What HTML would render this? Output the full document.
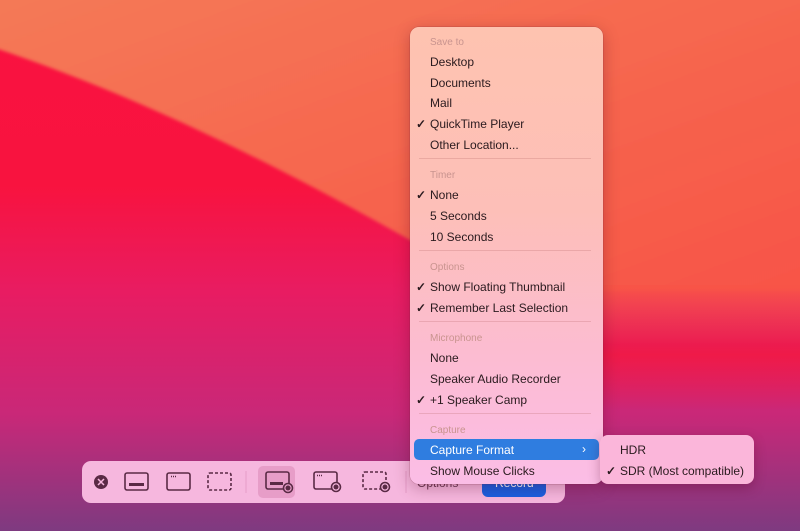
<!DOCTYPE html>
<html><head><meta charset="utf-8"><style>
*{margin:0;padding:0;box-sizing:border-box}
body{width:800px;height:531px;overflow:hidden;position:relative;font-family:"Liberation Sans",sans-serif;background:#e8336a}
.menu{position:absolute;left:410px;top:27px;width:193px;height:457px;border-radius:9px;background:linear-gradient(180deg,#fec3b0 0%,#fdbfb8 40%,#fcbcd4 75%,#fbbde6 100%);box-shadow:0 4px 16px rgba(80,0,30,.3),0 0 0 .5px rgba(120,40,60,.3)}
.it{position:absolute;left:20px;font-size:12px;color:#2a1a1e;white-space:nowrap;line-height:14px}
.hd{position:absolute;left:20px;font-size:10px;color:#c9948f;line-height:12px}
.ck{position:absolute;left:-14px;top:0;font-size:12px;font-weight:bold}
.sep{position:absolute;left:9px;right:12px;height:1px;background:rgba(180,100,100,.25)}
.hl{position:absolute;left:4px;width:185px;top:412px;height:21px;background:#2f7de0;border-radius:5px}
.sub{position:absolute;left:600px;top:435px;width:154px;height:49px;border-radius:8px;background:#fbb6da;box-shadow:0 4px 12px rgba(80,0,30,.3)}
.bar{position:absolute;left:82px;top:461px;width:483px;height:42px;border-radius:9px;background:#f6b7de}
</style></head><body>
<svg width="800" height="531" style="position:absolute;left:0;top:0">
<defs>
<linearGradient id="bg" x1="0" y1="0" x2="0" y2="1">
<stop offset="0" stop-color="#fa1240"/><stop offset=".35" stop-color="#f8133f"/><stop offset=".55" stop-color="#e81c62"/><stop offset=".78" stop-color="#c92878"/><stop offset="1" stop-color="#7e3a80"/></linearGradient>
<linearGradient id="or" x1="0" y1="0" x2="1" y2="1">
<stop offset="0" stop-color="#f47a57"/><stop offset="1" stop-color="#f85447"/></linearGradient>
<linearGradient id="fade" x1="0" y1="0" x2="0" y2="1">
<stop offset="0" stop-color="#f85447"/><stop offset="1" stop-color="#f85447" stop-opacity="0"/></linearGradient>
<linearGradient id="red" x1="0" y1="0" x2="0" y2="1">
<stop offset="0" stop-color="#f5183f" stop-opacity="0"/><stop offset=".5" stop-color="#f5183f" stop-opacity=".8"/><stop offset="1" stop-color="#f5183f" stop-opacity="0"/></linearGradient>
<filter id="b"><feGaussianBlur stdDeviation="1.5"/></filter>
</defs>
<rect width="800" height="531" fill="url(#bg)"/>
<rect x="560" y="300" width="245" height="110" fill="url(#red)"/>
<path d="M-5 -5 H805 V290 L600 290 C520 275 460 260 410 240 C250 150 120 90 -5 48 Z" fill="url(#or)" filter="url(#b)"/>
<rect x="560" y="285" width="245" height="60" fill="url(#fade)"/>
</svg>
<div class="bar">
<svg width="483" height="42" style="position:absolute;left:0;top:0" fill="none" stroke="#5a2a45" stroke-width="1.6">
<circle cx="19" cy="21" r="7" fill="#5a2a45" stroke="none"/>
<path d="M16 18l6 6M22 18l-6 6" stroke="#f6b7de" stroke-width="1.5"/>
<rect x="43" y="12" width="23" height="17" rx="2"/><rect x="47" y="22" width="15" height="3" fill="#5a2a45" stroke="none"/>
<rect x="85" y="12" width="23" height="17" rx="2"/><path d="M89 15.5h5" stroke-dasharray="1 1"/>
<rect x="126" y="12" width="23" height="17" rx="2" stroke-dasharray="3 2"/>
<path d="M164 10v22" stroke="#e59cc8" stroke-width="1"/>
<rect x="176" y="5" width="37" height="32" rx="5" fill="#e79dc8" stroke="none"/>
<rect x="184" y="11" width="23" height="17" rx="2"/><rect x="188" y="21" width="13" height="3" fill="#5a2a45" stroke="none"/><circle cx="206" cy="27" r="4.5" fill="#e79dc8"/><circle cx="206" cy="27" r="2.5" fill="#5a2a45" stroke="none"/>
<rect x="232" y="11" width="23" height="17" rx="2"/><path d="M235 14.5h5" stroke-dasharray="1 1"/><circle cx="254" cy="26" r="4.5" fill="#f6b7de"/><circle cx="254" cy="26" r="2.5" fill="#5a2a45" stroke="none"/>
<rect x="281" y="11" width="23" height="17" rx="2" stroke-dasharray="3 2"/><circle cx="303" cy="26" r="4.5" fill="#f6b7de"/><circle cx="303" cy="26" r="2.5" fill="#5a2a45" stroke="none"/>
<path d="M324 10v22" stroke="#e59cc8" stroke-width="1"/>
<rect x="400" y="9" width="64" height="27" rx="6" fill="#1a5fe0" stroke="none"/>
</svg>
<div style="position:absolute;left:335px;top:15px;font-size:12px;color:#6a3a55">Options</div>
<div style="position:absolute;left:413px;top:15px;font-size:12px;color:#fff">Record</div>
</div>
<div class="menu">
<div class="hd" style="top:10px">Save to</div>
<div class="it" style="top:28px">Desktop</div>
<div class="it" style="top:49px">Documents</div>
<div class="it" style="top:69px">Mail</div>
<div class="it" style="top:90px"><span class="ck">✓</span>QuickTime Player</div>
<div class="it" style="top:111px">Other Location...</div>
<div class="sep" style="top:131px"></div>
<div class="hd" style="top:143px">Timer</div>
<div class="it" style="top:161px"><span class="ck">✓</span>None</div>
<div class="it" style="top:182px">5 Seconds</div>
<div class="it" style="top:203px">10 Seconds</div>
<div class="sep" style="top:223px"></div>
<div class="hd" style="top:235px">Options</div>
<div class="it" style="top:253px"><span class="ck">✓</span>Show Floating Thumbnail</div>
<div class="it" style="top:274px"><span class="ck">✓</span>Remember Last Selection</div>
<div class="sep" style="top:294px"></div>
<div class="hd" style="top:306px">Microphone</div>
<div class="it" style="top:324px">None</div>
<div class="it" style="top:345px">Speaker Audio Recorder</div>
<div class="it" style="top:366px"><span class="ck">✓</span>+1 Speaker Camp</div>
<div class="sep" style="top:386px"></div>
<div class="hd" style="top:398px">Capture</div>
<div class="hl"></div>
<div class="it" style="top:416px;color:#fff">Capture Format</div>
<div style="position:absolute;left:172px;top:415px;color:#fff;font-size:12px">›</div>
<div class="it" style="top:437px">Show Mouse Clicks</div>
</div>
<div class="sub">
<div class="it" style="top:8px">HDR</div>
<div class="it" style="top:29px"><span class="ck">✓</span>SDR (Most compatible)</div>
</div>
</body></html>
